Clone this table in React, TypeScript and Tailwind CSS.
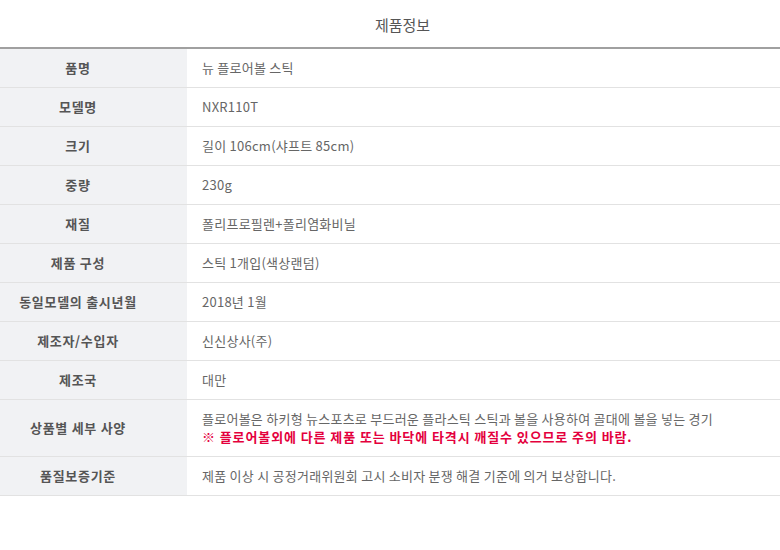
const rows: { label: string; value: string; warn?: string }[] = [
  { label: '품명', value: '뉴 플로어볼 스틱' },
  { label: '모델명', value: 'NXR110T' },
  { label: '크기', value: '길이 106cm(샤프트 85cm)' },
  { label: '중량', value: '230g' },
  { label: '재질', value: '폴리프로필렌+폴리염화비닐' },
  { label: '제품 구성', value: '스틱 1개입(색상랜덤)' },
  { label: '동일모델의 출시년월', value: '2018년 1월' },
  { label: '제조자/수입자', value: '신신상사(주)' },
  { label: '제조국', value: '대만' },
  {
    label: '상품별 세부 사양',
    value: '플로어볼은 하키형 뉴스포츠로 부드러운 플라스틱 스틱과 볼을 사용하여 골대에 볼을 넣는 경기',
    warn: '※ 플로어볼외에 다른 제품 또는 바닥에 타격시 깨질수 있으므로 주의 바람.',
  },
  { label: '품질보증기준', value: '제품 이상 시 공정거래위원회 고시 소비자 분쟁 해결 기준에 의거 보상합니다.' },
]

export default function App() {
  return (
    <div className="w-[780px] h-[550px] bg-white font-['Noto_Sans_CJK_KR','Liberation_Sans',sans-serif] overflow-hidden">
      <h2 className="h-[47px] pl-[25px] pt-[3px] flex items-center justify-center text-[15px] font-normal text-[#555]">
        제품정보
      </h2>
      <table className="w-full border-collapse border-t-2 border-[#a0a0a0]">
        <tbody>
          {rows.map(row => (
            <tr key={row.label} className="border-b border-[#e2e2e2]">
              <th className="w-[187px] pr-[31px] bg-[#f1f2f4] text-center align-middle text-[13px] font-bold text-[#555] tracking-[0.7px] leading-[18px]">
                {row.label}
              </th>
              <td
                className={`pl-[15px] text-left align-middle text-[13px] text-[#666] tracking-[0.25px] leading-[18px] ${
                  row.warn ? 'h-[57px]' : 'h-[39px]'
                }`}
              >
                <p>{row.value}</p>
                {row.warn && <p className="font-bold text-[#e4003d] tracking-[0.9px]">{row.warn}</p>}
              </td>
            </tr>
          ))}
        </tbody>
      </table>
    </div>
  )
}
